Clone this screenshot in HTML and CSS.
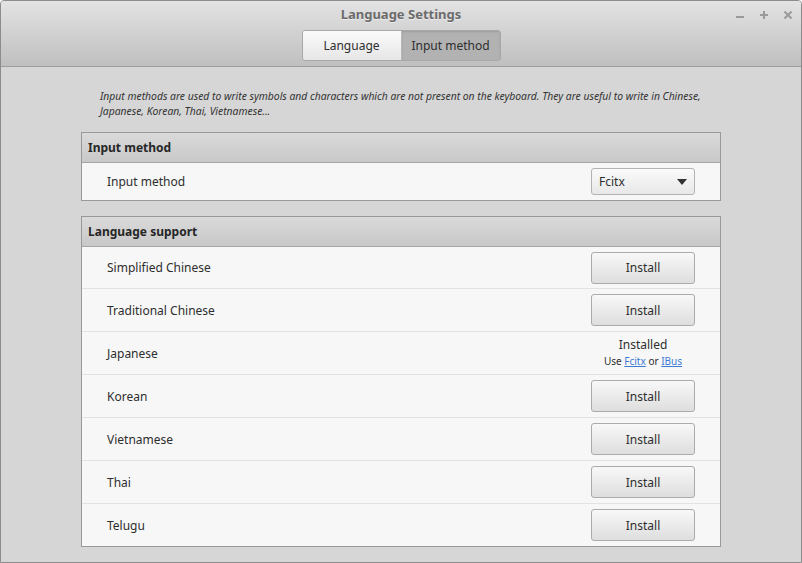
FILE: index.html
```html
<!DOCTYPE html>
<html>
<head>
<meta charset="utf-8">
<link rel="stylesheet" href="styles.css">
</head>
<body>
<div class="window">
  <header class="titlebar">
    <div class="title">Language Settings</div>
    <div class="controls">
      <span class="ctl">
        <svg width="10" height="10" viewBox="0 0 10 10"><rect x="1" y="6" width="8" height="2" fill="#9a9a9a"/></svg>
      </span>
      <span class="ctl">
        <svg width="10" height="10" viewBox="0 0 10 10"><rect x="1" y="4" width="8" height="2" fill="#9a9a9a"/><rect x="4" y="1" width="2" height="8" fill="#9a9a9a"/></svg>
      </span>
      <span class="ctl">
        <svg width="10" height="10" viewBox="0 0 10 10"><path d="M1.5 1.5 L8.5 8.5 M8.5 1.5 L1.5 8.5" stroke="#9a9a9a" stroke-width="2"/></svg>
      </span>
    </div>
    <div class="switcher">
      <button class="tab">Language</button>
      <button class="tab active">Input method</button>
    </div>
  </header>
  <main class="content">
    <p class="desc">Input methods are used to write symbols and characters which are not present on the keyboard. They are useful to write in Chinese, Japanese, Korean, Thai, Vietnamese...</p>
    <section class="frame">
      <div class="frame-head">Input method</div>
      <div class="row first">
        <span class="label">Input method</span>
        <div class="combo"><span>Fcitx</span><svg width="10" height="6" viewBox="0 0 10 6"><path d="M0 0 H10 L5 6 Z" fill="#333"/></svg></div>
      </div>
    </section>
    <section class="frame">
      <div class="frame-head">Language support</div>
      <div class="row first"><span class="label">Simplified Chinese</span><button class="btn">Install</button></div>
      <div class="row"><span class="label">Traditional Chinese</span><button class="btn">Install</button></div>
      <div class="row"><span class="label">Japanese</span>
        <div class="installed"><div class="inst">Installed</div><div class="use">Use <a href="#">Fcitx</a> or <a href="#">IBus</a></div></div>
      </div>
      <div class="row"><span class="label">Korean</span><button class="btn">Install</button></div>
      <div class="row"><span class="label">Vietnamese</span><button class="btn">Install</button></div>
      <div class="row"><span class="label">Thai</span><button class="btn">Install</button></div>
      <div class="row"><span class="label">Telugu</span><button class="btn">Install</button></div>
    </section>
  </main>
</div>
</body>
</html>
```
FILE: styles.css
```css
* { box-sizing: border-box; }
html, body { margin: 0; padding: 0; }
body {
  width: 802px;
  height: 563px;
  font-family: "Noto Sans", "DejaVu Sans", sans-serif;
  font-size: 12px;
  color: #2e2e2e;
  overflow: hidden;
}
.window {
  width: 802px;
  height: 563px;
  border: 1px solid #8c8c8c;
  border-radius: 4px 4px 0 0;
  background: #d6d6d6;
  display: flex;
  flex-direction: column;
  overflow: hidden;
}
.titlebar {
  position: relative;
  height: 66px;
  flex: none;
  background: linear-gradient(#e3e3e3, #bfbfbf);
  border-bottom: 1px solid #9c9c9c;
  display: flex;
  flex-direction: column;
  align-items: center;
}
.title {
  margin-top: 3px;
  height: 20px;
  line-height: 20px;
  font-weight: bold;
  font-size: 13px;
  color: #6b6b6b;
  text-shadow: 0 1px 0 rgba(255,255,255,0.5);
}
.controls {
  position: absolute;
  right: 8px;
  top: 9px;
  display: flex;
  gap: 14px;
}
.ctl { width: 10px; height: 10px; display: flex; }
.switcher {
  margin-top: 6px;
  display: flex;
  border: 1px solid #a8a8a8;
  border-radius: 3px;
  overflow: hidden;
}
.tab {
  font-family: inherit;
  font-size: 12px;
  color: #2e2e2e;
  height: 29px;
  border: none;
  padding: 0;
  background: linear-gradient(#fbfbfb, #e6e6e6);
}
.tab:first-child { width: 99px; border-right: 1px solid #b8b8b8; }
.tab.active {
  width: 98px;
  background: #b2b2b2;
  box-shadow: inset 0 1px 2px rgba(0,0,0,0.12);
}
.content {
  padding: 0 80px 0 80px;
  display: flex;
  flex-direction: column;
}
.desc {
  margin: 22px 10px 13px 19px;
  font-size: 10.35px;
  font-style: italic;
  line-height: 15px;
  color: #333;
}
.frame {
  border: 1px solid #999;
  background: #f7f7f7;
  margin-bottom: 15px;
}
.frame-head {
  height: 30px;
  line-height: 29px;
  padding-left: 6px;
  font-weight: bold;
  color: #262626;
  background: linear-gradient(#dadada, #c8c8c8);
  border-bottom: 1px solid #a6a6a6;
}
.row {
  height: 43px;
  display: flex;
  align-items: center;
  justify-content: space-between;
  padding: 0 25px 0 25px;
  border-top: 1px solid #e2e2e2;
}
.row.first { border-top: none; height: 37px; }
.frame:last-child .row.first { height: 41px; }
.label { color: #2e2e2e; }
.combo {
  width: 104px;
  height: 27px;
  border: 1px solid #b3b3b3;
  border-radius: 3px;
  background: linear-gradient(#fafafa, #e8e8e8);
  display: flex;
  align-items: center;
  justify-content: space-between;
  padding: 0 7px 0 7px;
}
.btn {
  font-family: inherit;
  font-size: 12px;
  color: #2e2e2e;
  width: 104px;
  height: 32px;
  border: 1px solid #ababab;
  border-radius: 3px;
  background: linear-gradient(#f8f8f8, #dedede);
  padding: 0;
}
.installed {
  width: 104px;
  text-align: center;
}
.inst { font-size: 12px; line-height: 16px; }
.use { font-size: 10px; line-height: 16px; }
.use a { color: #3b7bd4; text-decoration: underline; }
```
